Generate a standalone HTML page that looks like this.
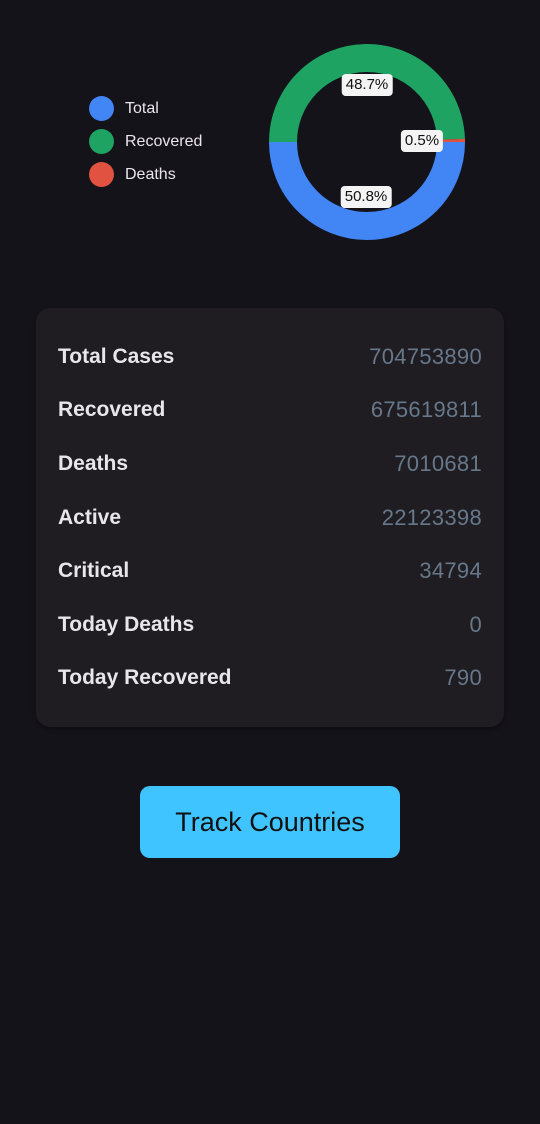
<!DOCTYPE html>
<html><head><meta charset="utf-8"><style>
*{margin:0;padding:0;box-sizing:border-box}
body{width:540px;height:1124px;background:#15131a;font-family:"Liberation Sans",sans-serif;position:relative;overflow:hidden}
.lg{position:absolute;left:89px;display:flex;align-items:center;color:#e8e6ea;font-size:16px}
.lg i{width:25px;height:25px;border-radius:50%;display:block;margin-right:11px}
.tag{position:absolute;background:#f4f4f4;color:#111;font-size:15px;border-radius:4px;padding:2px 4px;transform:translate(-50%,-50%);line-height:18px}
.card{position:absolute;left:36px;top:308px;width:468px;height:419px;background:#1f1d22;border-radius:14px;box-shadow:0 2px 4px rgba(0,0,0,.4)}
.row{position:absolute;left:22px;right:22px;display:flex;justify-content:space-between;align-items:center;height:30px}
.row b{font-weight:bold;color:#e8e6ea;font-size:21px}
.row span{color:#66788a;font-size:22px;letter-spacing:.3px}
.btn{position:absolute;left:140px;top:786px;width:260px;height:72px;background:#40c4ff;border-radius:10px;color:#111;font-size:27px;display:flex;align-items:center;justify-content:center}
</style></head><body>
<div class="lg" style="top:96px"><i style="background:#4285f4"></i>Total</div>
<div class="lg" style="top:129px"><i style="background:#1ea362"></i>Recovered</div>
<div class="lg" style="top:162px"><i style="background:#e15241"></i>Deaths</div>
<svg width="540" height="300" style="position:absolute;left:0;top:0">
<g fill="none" stroke-width="28">
<path d="M283 142 A84 84 0 0 0 451 142" stroke="#4285f4"/>
<path d="M283 142 A84 84 0 0 1 450.96 139.36" stroke="#1ea362"/>
<path d="M450.96 139.36 A84 84 0 0 1 451 142" stroke="#e15241"/>
</g></svg>
<div class="tag" style="left:367px;top:85px">48.7%</div>
<div class="tag" style="left:422px;top:141px">0.5%</div>
<div class="tag" style="left:366px;top:197px">50.8%</div>
<div class="card">
<div class="row" style="top:34px"><b>Total Cases</b><span>704753890</span></div>
<div class="row" style="top:87px"><b>Recovered</b><span>675619811</span></div>
<div class="row" style="top:141px"><b>Deaths</b><span>7010681</span></div>
<div class="row" style="top:195px"><b>Active</b><span>22123398</span></div>
<div class="row" style="top:248px"><b>Critical</b><span>34794</span></div>
<div class="row" style="top:302px"><b>Today Deaths</b><span>0</span></div>
<div class="row" style="top:355px"><b>Today Recovered</b><span>790</span></div>
</div>
<div class="btn">Track Countries</div>
</body></html>
